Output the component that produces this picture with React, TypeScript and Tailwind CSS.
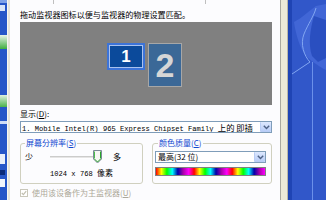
import React from 'react';

const cjk = '"Noto Sans CJK SC", "Liberation Sans", sans-serif';

const Chevron: React.FC = () => (
  <svg width="7" height="5" viewBox="0 0 7 5">
    <path d="M0.8 0.8 L3.5 3.6 L6.2 0.8" fill="none" stroke="#4d6185" strokeWidth="1.4" />
  </svg>
);

const DropButton: React.FC = () => (
  <div className="w-[11px] h-full flex items-center justify-center bg-[linear-gradient(180deg,#dde8fe,#b6cbf6)] border-l border-[#b9cdf4] rounded-[1px]">
    <Chevron />
  </div>
);

const Slider: React.FC = () => (
  <svg width="56" height="16" viewBox="0 0 56 16">
    <line x1="2" y1="8" x2="50" y2="8" stroke="#9d9c99" strokeWidth="1" />
    <line x1="2" y1="9" x2="50" y2="9" stroke="#ffffff" strokeWidth="1" />
    <path d="M45.5 1.5 H53.5 V10 L49.5 14 L45.5 10 Z" fill="#f7f7f4" stroke="#7b8a97" strokeWidth="1" />
    <path d="M46.5 10 L49.5 13 L52.5 10" fill="none" stroke="#2aa52a" strokeWidth="1" />
    <line x1="46.5" y1="2.5" x2="46.5" y2="9.5" stroke="#4cbf4c" strokeWidth="1" />
    <line x1="52.5" y1="2.5" x2="52.5" y2="9.5" stroke="#2aa52a" strokeWidth="1" />
  </svg>
);

const Desktop: React.FC = () => (
  <svg width="38" height="200" viewBox="0 0 38 200" className="block">
    <rect width="38" height="200" fill="#3157c9" />
    <rect width="4" height="200" fill="#1f44b4" />
    <path d="M6 22 C14 18 22 10 28 6 L38 4 L38 70 C30 66 22 60 18 56 C12 48 8 36 6 22 Z" fill="#4166d6" />
    <path d="M26 16 C22 30 20 44 24 56 L30 62 L38 58 L38 20 Z" fill="#2a4fc0" />
    <path d="M4 74 L22 62 C16 56 12 44 16 34 C20 24 26 16 28 8" fill="none" stroke="#82a6f2" strokeWidth="1" />
    <line x1="24.5" y1="62" x2="24.5" y2="200" stroke="#6b90ea" strokeWidth="1" />
  </svg>
);

const LeftStrip: React.FC = () => (
  <div className="w-[7px] h-full bg-[#2656c8] flex flex-col">
    <div className="h-[3px] bg-[#7fa2e8]" />
    <div className="h-[6px] mt-[2px] bg-[#d8e4f8] w-[5px]" />
    <div className="h-[14px] mt-[24px] bg-[linear-gradient(180deg,#e8f3e8,#3fae3f)]" />
    <div className="h-[12px] mt-[46px] bg-[linear-gradient(180deg,#dff0df,#4bb34b)]" />
    <div className="h-[3px] mt-[14px] bg-[#cfdcf6]" />
    <div className="h-[10px] mt-[30px] bg-[#e8eef9] w-[5px]" />
    <div className="h-[5px] mt-[6px] bg-[#0a2a7a] w-[5px]" />
    <div className="h-[8px] mt-[4px] bg-[#f3f6fb] w-[5px]" />
  </div>
);

const App: React.FC = () => {
  return (
    <div className="w-[326px] h-[200px] flex overflow-hidden bg-[#3157c9] text-black" style={{ fontFamily: cjk }}>
      <LeftStrip />
      <div className="w-[3px] h-full bg-[#e6e4dc] border-l border-[#f7f6f1]" />

      {/* tab page */}
      <div className="w-[271px] h-full bg-[#fcfcfe] border-r border-[#a9a89f] flex flex-col pl-[10px]">
        <div className="h-[4px] flex -ml-[10px]">
          <div className="w-[44px] border-r border-[#bfbfbf]" />
          <div className="w-[152px] border-r border-[#bfbfbf]" />
        </div>

        <div className="mt-[5px] h-[12px] leading-[12px] text-[8.1px] whitespace-nowrap">
          拖动监视器图标以便与监视器的物理设置匹配。
        </div>

        {/* monitor arrangement */}
        <div className="mt-[1px] w-[252px] h-[83px] bg-[#808080] relative">
          <div className="absolute left-[87px] top-[21px] w-[38px] h-[27px] bg-[#3d74d8] p-[2px]">
            <div className="w-full h-full border border-[#a9c2ee] bg-[#0b4a9b] flex items-center justify-center">
              <span className="text-white font-bold text-[17px] leading-none" style={{ fontFamily: '"Liberation Sans", sans-serif' }}>1</span>
            </div>
          </div>
          <div className="absolute left-[128px] top-[21px] w-[34px] h-[44px] bg-[#3b6897] border border-[#a7a7a7] flex items-center justify-center">
            <span className="text-[#d6d6d6] font-bold text-[34px] leading-none" style={{ fontFamily: '"Liberation Sans", sans-serif' }}>2</span>
          </div>
        </div>

        <div className="mt-[3px] h-[12px] leading-[12px] text-[8px]">
          显示(<span className="underline">D</span>):
        </div>

        <div className="mt-[1px] w-[252px] h-[12px] border border-[#7f9db9] bg-white flex">
          <div className="flex-1 overflow-hidden whitespace-nowrap pl-[1px] text-[7.1px] leading-[10px]" style={{ fontFamily: '"Liberation Mono", "Noto Sans CJK SC", monospace' }}>
            1. Mobile Intel(R) 965 Express Chipset Family <span className="text-[8.3px]" style={{ fontFamily: cjk }}>上的 即插</span>
          </div>
          <DropButton />
        </div>

        <div className="mt-[5px] flex gap-[9px]">
          <fieldset className="w-[123px] h-[46px] border border-[#d0d0bf] rounded-[3px] px-[4px]">
            <legend className="text-[8px] leading-[10px] text-[#1048d0] px-[1px]">
              屏幕分辨率(<span className="underline">S</span>)
            </legend>
            <div className="flex items-center h-[16px] mt-[1px] text-[8px]">
              <span className="w-[23px]">少</span>
              <Slider />
              <span className="ml-[9px]">多</span>
            </div>
            <div className="mt-[3px] text-center text-[7.1px] leading-[10px] whitespace-nowrap" style={{ fontFamily: '"Liberation Mono", "Noto Sans CJK SC", monospace' }}>
              1024 x 768 <span className="text-[8px]" style={{ fontFamily: cjk }}>像素</span>
            </div>
          </fieldset>

          <fieldset className="w-[120px] h-[46px] border border-[#d0d0bf] rounded-[3px] pl-[2px] pr-[5px]">
            <legend className="text-[8px] leading-[10px] text-[#1048d0] ml-[3px] px-[1px]">
              颜色质量(<span className="underline">C</span>)
            </legend>
            <div className="mt-[3px] h-[12px] border border-[#7f9db9] bg-white flex">
              <div className="flex-1 pl-[2px] text-[8px] leading-[10px] whitespace-nowrap">
                最高(32 位)
              </div>
              <DropButton />
            </div>
            <div className="mt-[4px] h-[9px] bg-[linear-gradient(90deg,#f00,#ff0,#0f0,#0ff,#00a,#a0a,#f0f,#f00,#ff0,#0f0,#0ff,#00a,#a0a,#f0f,#f00,#ff0,#0f0,#0ff,#00a,#a0a,#f0f)] border border-[#808080]" />
          </fieldset>
        </div>

        <div className="mt-[3px] h-[11px] flex items-center gap-[4px] text-[8px] text-[#aca899]">
          <div className="w-[8px] h-[8px] border border-[#c9c7ba] bg-white flex items-center justify-center">
            <svg width="6" height="6" viewBox="0 0 6 6">
              <path d="M0.8 3 L2.4 4.6 L5.2 1.2" fill="none" stroke="#c0beb0" strokeWidth="1.2" />
            </svg>
          </div>
          <span>使用该设备作为主监视器(<span className="underline">U</span>)</span>
        </div>
      </div>

      <div className="w-[7px] h-full bg-[#ece9d8] border-r border-[#b9b6a9]" />
      <Desktop />
    </div>
  );
};

export default App;
